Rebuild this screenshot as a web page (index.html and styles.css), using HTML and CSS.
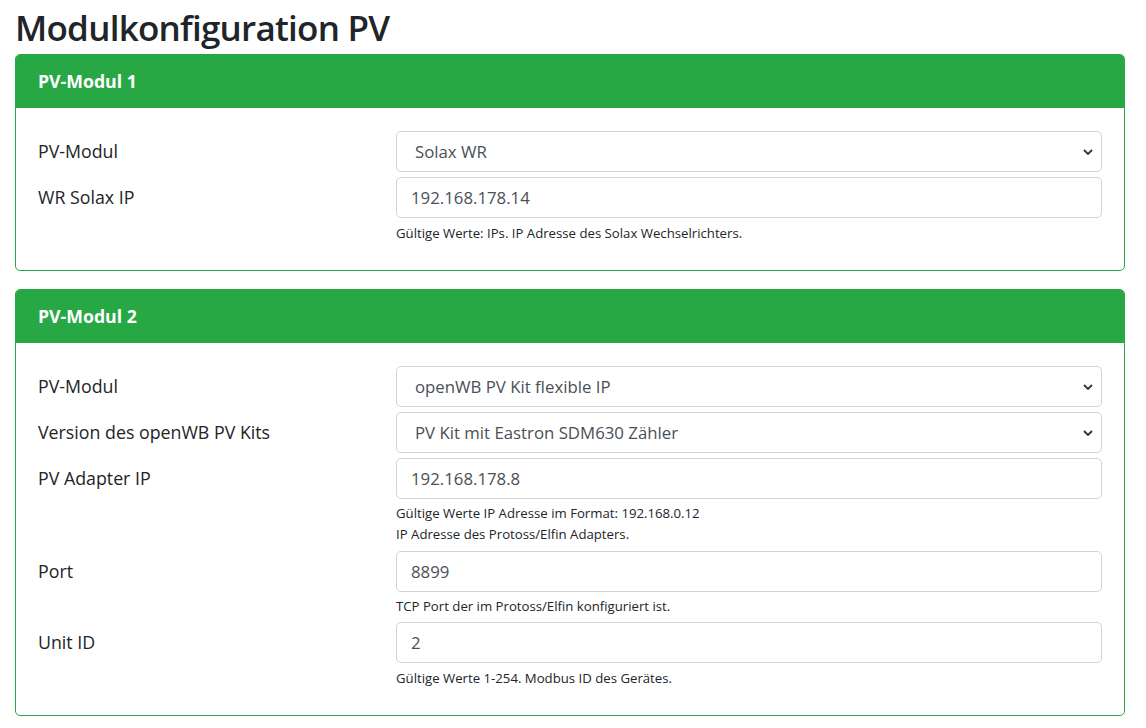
FILE: index.html
```html
<!DOCTYPE html>
<html lang="de">
<head>
    <meta charset="UTF-8">
    <meta name="viewport" content="width=device-width, initial-scale=1.0">
    <title>Modulkonfiguration PV</title>
    <link rel="stylesheet" href="styles.css">
</head>
<body>
    <div class="page">
        <h1>Modulkonfiguration PV</h1>

        <div class="card">
            <div class="card-header">PV-Modul 1</div>
            <div class="card-body">
                <div class="form-row">
                    <label class="col-label">PV-Modul</label>
                    <div class="col-input">
                        <div class="select-wrap">
                            <select class="form-control">
                                <option>Solax WR</option>
                            </select>
                            <svg class="chevron" width="10" height="6" viewBox="0 0 10 6"><path d="M1 1l4 4 4-4" fill="none" stroke="#333" stroke-width="1.8"/></svg>
                        </div>
                    </div>
                </div>
                <div class="form-row">
                    <label class="col-label">WR Solax IP</label>
                    <div class="col-input">
                        <input class="form-control" type="text" value="192.168.178.14">
                        <span class="form-text">Gültige Werte: IPs. IP Adresse des Solax Wechselrichters.</span>
                    </div>
                </div>
            </div>
        </div>

        <div class="card">
            <div class="card-header">PV-Modul 2</div>
            <div class="card-body">
                <div class="form-row">
                    <label class="col-label">PV-Modul</label>
                    <div class="col-input">
                        <div class="select-wrap">
                            <select class="form-control">
                                <option>openWB PV Kit flexible IP</option>
                            </select>
                            <svg class="chevron" width="10" height="6" viewBox="0 0 10 6"><path d="M1 1l4 4 4-4" fill="none" stroke="#333" stroke-width="1.8"/></svg>
                        </div>
                    </div>
                </div>
                <div class="form-row">
                    <label class="col-label">Version des openWB PV Kits</label>
                    <div class="col-input">
                        <div class="select-wrap">
                            <select class="form-control">
                                <option>PV Kit mit Eastron SDM630 Zähler</option>
                            </select>
                            <svg class="chevron" width="10" height="6" viewBox="0 0 10 6"><path d="M1 1l4 4 4-4" fill="none" stroke="#333" stroke-width="1.8"/></svg>
                        </div>
                    </div>
                </div>
                <div class="form-row">
                    <label class="col-label">PV Adapter IP</label>
                    <div class="col-input">
                        <input class="form-control" type="text" value="192.168.178.8">
                        <span class="form-text">Gültige Werte IP Adresse im Format: 192.168.0.12</span>
                        <span class="form-text">IP Adresse des Protoss/Elfin Adapters.</span>
                    </div>
                </div>
                <div class="form-row">
                    <label class="col-label">Port</label>
                    <div class="col-input">
                        <input class="form-control" type="text" value="8899">
                        <span class="form-text">TCP Port der im Protoss/Elfin konfiguriert ist.</span>
                    </div>
                </div>
                <div class="form-row">
                    <label class="col-label">Unit ID</label>
                    <div class="col-input">
                        <input class="form-control" type="text" value="2">
                        <span class="form-text">Gültige Werte 1-254. Modbus ID des Gerätes.</span>
                    </div>
                </div>
            </div>
        </div>
    </div>
</body>
</html>
```

FILE: styles.css
```css
body {
    margin: 0;
    background-color: #fff;
    color: #212529;
    font-family: "Open Sans", "Liberation Sans", sans-serif;
    font-size: 17.8px;
}
.page {
    padding: 0 21px 0 15px;
}
h1 {
    margin: 0;
    padding-top: 4px;
    height: 50px;
    font-size: 35px;
    font-weight: 600;
    line-height: 48px;
    letter-spacing: -0.75px;
}
.card {
    border: 1px solid #28a745;
    border-radius: 5px;
    margin-bottom: 18px;
    overflow: hidden;
}
.card-header {
    background-color: #28a745;
    color: #fff;
    font-size: 17.7px;
    font-weight: 700;
    height: 53px;
    line-height: 53px;
    padding: 0 22px;
}
.card-body {
    padding: 23px 22px 21px 22px;
}
.form-row {
    display: grid;
    grid-template-columns: 358px 1fr;
    margin-bottom: 5px;
}
.col-label {
    line-height: 41px;
}
.col-input {
    display: flex;
    flex-direction: column;
}
.select-wrap {
    position: relative;
}
.form-control {
    box-sizing: border-box;
    width: 100%;
    height: 41px;
    padding: 0 14px;
    border: 1px solid #ced4da;
    border-radius: 5px;
    background-color: #fff;
    color: #495057;
    font-family: inherit;
    font-size: 16.8px;
    outline: none;
}
select.form-control {
    appearance: none;
    -webkit-appearance: none;
    padding-left: 18px;
}
.chevron {
    position: absolute;
    right: 9px;
    top: 18px;
    pointer-events: none;
}
.form-text {
    display: block;
    margin-top: 4.5px;
    font-size: 13.2px;
    line-height: 21.2px;
}
.form-text + .form-text {
    margin-top: 0;
}
```
